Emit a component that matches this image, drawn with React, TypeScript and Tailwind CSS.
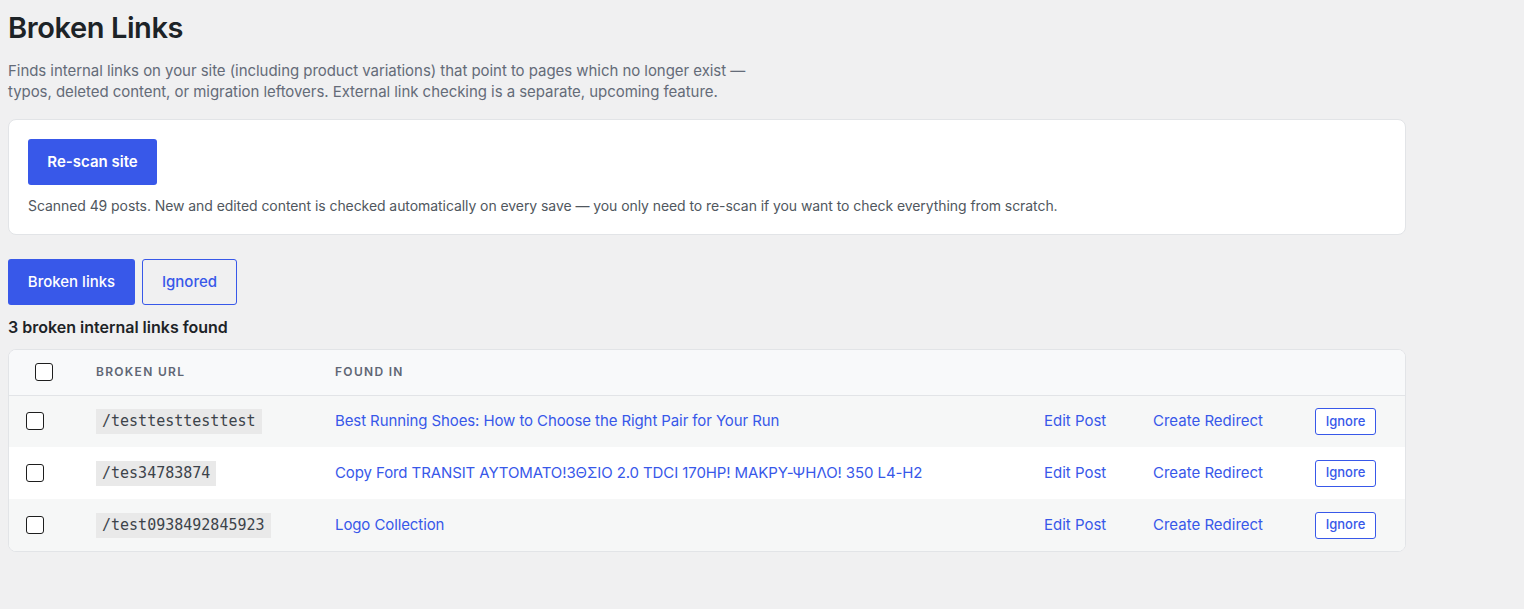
import React from "react";

const rows = [
  { url: "/testtesttesttest", title: "Best Running Shoes: How to Choose the Right Pair for Your Run", bg: "bg-[#f6f7f7]" },
  { url: "/tes34783874", title: "Copy Ford TRANSIT ΑΥΤΟΜΑΤΟ!3ΘΣΙΟ 2.0 TDCI 170HP! ΜΑΚΡΥ-ΨΗΛΟ! 350 L4-H2", bg: "bg-white" },
  { url: "/test0938492845923", title: "Logo Collection", bg: "bg-[#f6f7f7]" },
];

function Checkbox() {
  return <span className="block w-[18px] h-[18px] rounded-[3px] border-[1.5px] border-[#1e1e1e] bg-white" />;
}

export default function App() {
  return (
    <div className="min-h-[609px] bg-[#f0f0f1] font-['Inter',sans-serif] text-[#1d2327]">
      <div className="w-[1398px] ml-2 pt-[10px]">
        <h1 className="text-[29px] leading-[36px] font-semibold tracking-[-0.4px] text-[#1d2327]">Broken Links</h1>
        <p className="mt-[14px] text-[15px] leading-[21px] text-[#646b78] w-[760px] tracking-[-0.05px]">
          Finds internal links on your site (including product variations) that point to pages which no longer exist —
          typos, deleted content, or migration leftovers. External link checking is a separate, upcoming feature.
        </p>
        <div className="mt-[17px] bg-white rounded-[8px] border border-[#e2e4e7] px-[19px] pt-[19px] pb-[18px]">
          <button className="h-[46px] w-[129px] rounded-[3px] bg-[#3858e9] text-white text-[15px] font-semibold">Re-scan site</button>
          <p className="mt-[11px] text-[14px] leading-[20px] text-[#50575e] tracking-[-0.07px]">
            Scanned 49 posts. New and edited content is checked automatically on every save — you only need to re-scan if you want to check everything from scratch.
          </p>
        </div>
        <div className="mt-[24px] flex gap-[7px]">
          <button className="h-[46px] w-[127px] rounded-[3px] bg-[#3858e9] text-white text-[15px] font-medium">Broken links</button>
          <button className="h-[46px] w-[95px] rounded-[3px] border border-[#3858e9] text-[#3858e9] text-[15px] font-medium">Ignored</button>
        </div>
        <h2 className="mt-[11px] text-[16px] leading-[22px] font-semibold text-[#1d2327]">3 broken internal links found</h2>
        <div className="mt-[11px] bg-white rounded-[8px] border border-[#e2e4e7] overflow-hidden">
          <table className="w-full border-collapse table-fixed">
            <colgroup>
              <col className="w-[71px]" />
              <col className="w-[239px]" />
              <col className="w-[709px]" />
              <col className="w-[109px]" />
              <col className="w-[162px]" />
              <col className="w-[108px]" />
            </colgroup>
            <thead>
              <tr className="h-[45px] bg-[#f8f9fa] border-b border-[#e2e4e7]">
                <th className="pl-[26px] text-left"><Checkbox /></th>
                <th className="pl-[16px] text-left text-[12px] font-semibold tracking-[1.3px] text-[#5f6675] uppercase">Broken URL</th>
                <th className="pl-[16px] text-left text-[12px] font-semibold tracking-[1.3px] text-[#5f6675] uppercase">Found in</th>
                <th />
                <th />
                <th />
              </tr>
            </thead>
            <tbody>
              {rows.map((r, i) => (
                <tr key={i} className={`${r.bg} h-[52px]`}>
                  <td className="pl-[17px]"><Checkbox /></td>
                  <td className="pl-[16px]">
                    <code className="inline-block px-[6px] py-[2px] bg-[#e9e9e9] font-['DejaVu_Sans_Mono',monospace] text-[15px] leading-[21px] text-[#3c434a]">{r.url}</code>
                  </td>
                  <td className="pl-[16px] text-[15px] text-[#3858e9] whitespace-nowrap tracking-[-0.1px]">{r.title}</td>
                  <td className="pl-[16px] text-[15px] text-[#3858e9] whitespace-nowrap">Edit Post</td>
                  <td className="pl-[16px] text-[15px] text-[#3858e9] whitespace-nowrap">Create Redirect</td>
                  <td className="pl-[16px]">
                    <button className="h-[27px] w-[61px] rounded-[3px] border border-[#3858e9] bg-white text-[13px] font-medium text-[#3858e9]">Ignore</button>
                  </td>
                </tr>
              ))}
            </tbody>
          </table>
        </div>
      </div>
    </div>
  );
}
